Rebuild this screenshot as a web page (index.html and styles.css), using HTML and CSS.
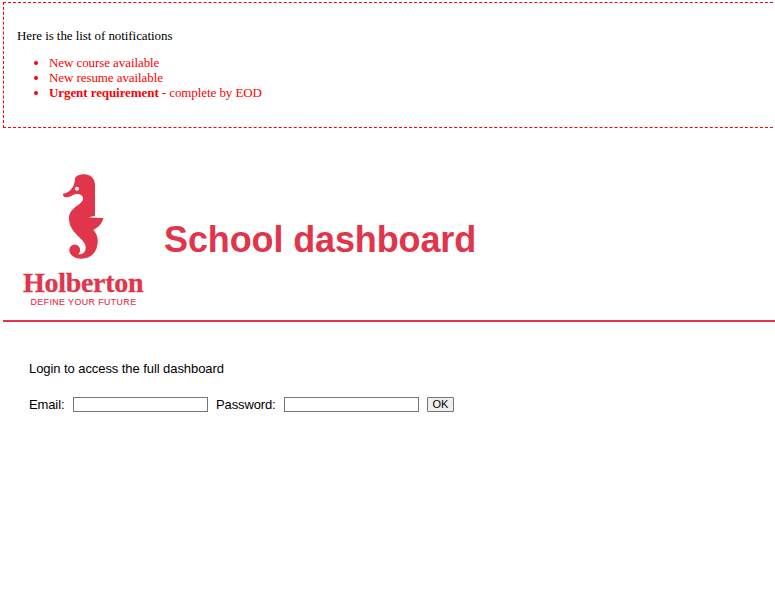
FILE: index.html
```
<!DOCTYPE html>
<html lang="en">
<head>
<meta charset="utf-8">
<title>School dashboard</title>
<link rel="stylesheet" href="styles.css">
</head>
<body>
<section class="notifications">
  <p class="notice-title">Here is the list of notifications</p>
  <ul class="notice-list">
    <li>New course available</li>
    <li>New resume available</li>
    <li><strong>Urgent requirement</strong> - complete by EOD</li>
  </ul>
</section>
<header class="header">
  <svg class="logo" width="140" height="160" viewBox="0 0 140 160" role="img" aria-label="Holberton">
    <g transform="translate(37 5) scale(.33333)">
      <path fill-rule="evenodd" d="M76 37C83 29 94 27 106 28C123 30 135 41 135 60V152L118 157L134 158L160 159C157 174 147 186 130 195C141 206 146 222 142 240C138 266 119 281 94 281C72 282 58 269 58 255C58 244 66 238 76 239C86 240 92 248 90 258C89 263 87 266 84 268C98 269 108 260 107 246C106 220 57 207 57 160C57 126 97 121 99 101C99 92 91 87 80 87C69 87 62 97 50 97C42 97 38 91 39 86C59 83 71 67 74 50ZM81 65A6 6 0 1 0 81 77A6 6 0 1 0 81 65Z"/>
      <path class="fin-line" d="M119 157L136 154"/>
    </g>
    <text class="wordmark" x="10" y="131.7" textLength="120.5" lengthAdjust="spacing">Holberton</text>
    <text class="tagline" x="17.5" y="145" textLength="105.5" lengthAdjust="spacing">DEFINE YOUR FUTURE</text>
  </svg>
  <h1 class="title">School dashboard</h1>
</header>
<main class="login">
  <p class="intro">Login to access the full dashboard</p>
  <form class="form">
    <label class="email-label" for="email">Email:</label>
    <input id="email" type="email">
    <label class="password-label" for="password">Password:</label>
    <input id="password" type="password">
    <button type="button">OK</button>
  </form>
</main>
</body>
</html>
```
FILE: styles.css
```
* { box-sizing: border-box; }
body {
  margin: 0;
  height: 610px;
  overflow: hidden;
  background: #fff;
  color: #000;
  font-family: "Liberation Sans", Arial, sans-serif;
  font-size: 13px;
}
.notifications {
  width: 790px;
  height: 126px;
  margin: 2px 0 0 3px;
  padding: 25px 13px 0;
  border: 1px dashed red;
  font: 13px/15px "Liberation Serif", "Times New Roman", serif;
}
.notice-title { margin: 0 0 12px; letter-spacing: -0.07px; }
.notice-list { margin: 0; padding-left: 32px; color: red; letter-spacing: -0.08px; }
.header {
  display: flex;
  align-items: center;
  height: 162px;
  margin: 32px 0 0 3px;
  padding-left: 10px;
  border-bottom: 2px solid #e1354b;
  color: #e1354b;
}
.logo { display: block; flex: none; fill: currentColor; }
.fin-line { fill: none; stroke: #fff; stroke-width: 1; }
.wordmark {
  font: bold 28px "Liberation Serif", serif;
  stroke: currentColor;
  stroke-width: .3px;
}
.tagline { font: 8.8px "Liberation Sans", sans-serif; stroke: currentColor; stroke-width: .15px; }
.title { margin: -1px 0 0 11px; font-size: 36px; line-height: 42px; letter-spacing: -0.12px; white-space: nowrap; }
.login { padding: 39px 0 0 29px; }
.intro { margin: 0 0 21px; line-height: 15px; letter-spacing: -0.07px; }
.form { display: flex; align-items: center; gap: 8px; height: 15px; }
label { letter-spacing: -0.12px; white-space: nowrap; }
.email-label { width: 36px; }
.password-label { width: 60px; }
input {
  width: 135px;
  height: 15px;
  margin: 0;
  padding: 0;
  border: 1px solid #767676;
  background: #fff;
}
button {
  width: 27px;
  height: 15px;
  margin: 0;
  padding: 0;
  border: 1px solid #767676;
  border-radius: 1px;
  background: #efefef;
  color: #000;
  font: 11px/13px "Liberation Sans", Arial, sans-serif;
}
```
